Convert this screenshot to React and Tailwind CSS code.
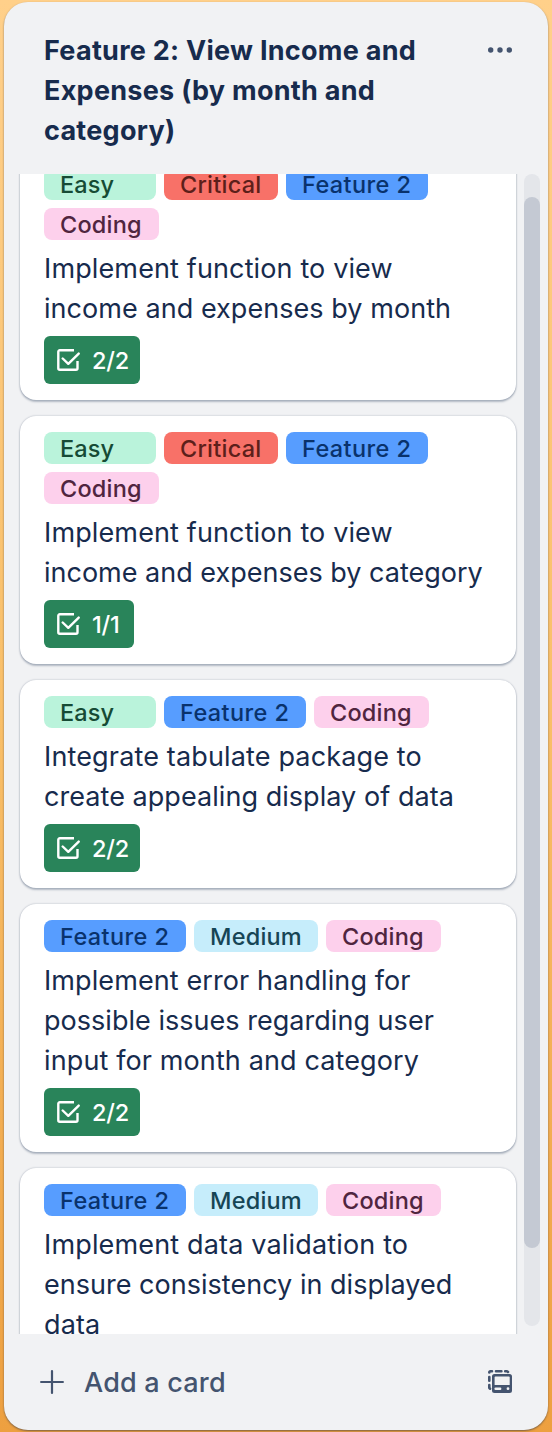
const LABELS = {
  easy: { text: 'Easy', style: 'w-[112px] bg-[#baf3db] text-[#164b35] tracking-[0.1px]' },
  critical: { text: 'Critical', style: 'w-[114px] bg-[#f87168] text-[#5d1f1a] tracking-[0.25px]' },
  feature: { text: 'Feature 2', style: 'w-[142px] bg-[#579dff] text-[#09326c] tracking-[0.4px]' },
  coding: { text: 'Coding', style: 'w-[114.5px] bg-[#fdd0ec] text-[#50253f] tracking-[0.2px]' },
  medium: { text: 'Medium', style: 'w-[124px] bg-[#c6edfb] text-[#164555] tracking-[0.2px]' },
};

const CARDS = [
  {
    labels: ['easy', 'critical', 'feature', 'coding'],
    lines: [
      { text: 'Implement function to view', spacing: 'tracking-[0.13px]' },
      { text: 'income and expenses by month', spacing: 'tracking-[0.05px]' },
    ],
    done: '2/2',
  },
  {
    labels: ['easy', 'critical', 'feature', 'coding'],
    lines: [
      { text: 'Implement function to view', spacing: 'tracking-[0.13px]' },
      { text: 'income and expenses by category', spacing: 'tracking-[0px]' },
    ],
    done: '1/1',
  },
  {
    labels: ['easy', 'feature', 'coding'],
    lines: [
      { text: 'Integrate tabulate package to', spacing: 'tracking-[0.15px]' },
      { text: 'create appealing display of data', spacing: 'tracking-[0.05px]' },
    ],
    done: '2/2',
  },
  {
    labels: ['feature', 'medium', 'coding'],
    lines: [
      { text: 'Implement error handling for', spacing: 'tracking-[0.1px]' },
      { text: 'possible issues regarding user', spacing: 'tracking-[0.03px]' },
      { text: 'input for month and category', spacing: 'tracking-[0.12px]' },
    ],
    done: '2/2',
  },
  {
    labels: ['feature', 'medium', 'coding'],
    lines: [
      { text: 'Implement data validation to', spacing: 'tracking-[0.16px]' },
      { text: 'ensure consistency in displayed', spacing: 'tracking-[0.02px]' },
      { text: 'data', spacing: 'tracking-[0.1px]' },
    ],
    done: '2/2',
  },
];

function CheckIcon() {
  return (
    <svg width="24" height="24" viewBox="0 0 24 24" fill="none" stroke="white" strokeWidth="2.4" strokeLinejoin="round">
      <path d="M18 2.300H4A1.500 1.500 0 0 0 2.300 3.800V20.200A1.500 1.500 0 0 0 3.800 21.700H20A1.500 1.500 0 0 0 21.500 20.200V13" />
      <path d="M6.700 10.500L12.300 15.800L22.700 5.600" strokeLinecap="round" />
    </svg>
  );
}

function TemplateIcon() {
  return (
    <svg width="24" height="24" viewBox="0 0 24 24" fill="none" stroke="#44546f" strokeWidth="2.6" strokeLinecap="round">
      <path d="M1.300 2.500V2.300A1 1 0 0 1 2.300 1.300H4M8 1.300H13.400M17.200 1.300H18.600A1.500 1.500 0 0 1 20 2M1.300 7V10.800M1.300 15V17.200A1.500 1.500 0 0 0 2 18.700" />
      <path fill="#44546f" stroke="none" fillRule="evenodd" d="M6.500 4H21.500A2.500 2.500 0 0 1 24 6.500V20.500A2.500 2.500 0 0 1 21.500 23H6.500A2.500 2.500 0 0 1 4 20.500V6.500A2.500 2.500 0 0 1 6.500 4ZM7.400 6.400A.8.8 0 0 0 6.600 7.200V15H21.700V7.200A.8.8 0 0 0 20.900 6.400ZM7.600 17.500A1.200 1.200 0 0 0 7.600 19.900H12.200A1.200 1.200 0 0 0 12.200 17.500ZM20 17.300A1.400 1.400 0 1 0 20 20.100A1.400 1.400 0 1 0 20 17.300Z" />
    </svg>
  );
}

function Card({ labels, lines, done }) {
  return (
    <li className="rounded-2xl bg-white px-6 py-4 shadow-[0_2px_2px_#091e4240,0_0_2px_#091e424f]">
      <div className="flex flex-wrap gap-2">
        {labels.map((key) => (
          <span key={key} className={`h-8 rounded-lg pl-4 text-[23.5px] leading-[34px] font-medium whitespace-nowrap ${LABELS[key].style}`}>
            {LABELS[key].text}
          </span>
        ))}
      </div>
      <p className="mt-[9px] mb-[7px] text-[27px] leading-10 font-[440] whitespace-nowrap text-[#172b4d]">
        {lines.map((line) => (
          <span key={line.text} className={`block ${line.spacing}`}>{line.text}</span>
        ))}
      </p>
      <div className={`flex h-12 items-center gap-3 rounded-md bg-[#29845a] pl-3 text-[23.5px] tracking-[-0.2px] text-white ${done === '1/1' ? 'w-[90px]' : 'w-24'}`}>
        <CheckIcon />
        <span className="pt-px font-[450]">{done}</span>
      </div>
    </li>
  );
}

export default function App() {
  return (
    <div className="h-[1432px] w-[552px] bg-linear-to-b from-[#ffd08a] via-[#f9bf68] to-[#eda040] px-1 py-0.5 font-['Inter',sans-serif]">
      <section className="flex h-[1428px] flex-col rounded-3xl bg-[#f1f2f4] shadow-[0_1px_2px_#091e4280]">
        <header className="flex h-[172px] shrink-0 items-start justify-between pt-7 pr-9 pl-10">
          <h2 className="pt-px text-[27px] leading-10 font-bold tracking-[0.27px] whitespace-nowrap text-[#172b4d]">
            <span className="block">Feature 2: View Income and</span>
            <span className="block">Expenses (by month and</span>
            <span className="block">category)</span>
          </h2>
          <svg className="mt-2" width="24" height="24" viewBox="0 0 24 24" fill="#44546f">
            <circle cx="2.700" cy="12" r="2.700" />
            <circle cx="12" cy="12" r="2.700" />
            <circle cx="21.300" cy="12" r="2.700" />
          </svg>
        </header>
        <div className="flex h-[1160px] shrink-0 items-start justify-between overflow-hidden pr-2 pl-3.5">
          <ol className="flex h-[1160px] w-[500px] flex-col overflow-hidden px-0.5">
            <div className="-mt-[22px] flex flex-col gap-4">
              {CARDS.map((card) => (
                <Card key={card.lines[1].text} {...card} />
              ))}
            </div>
          </ol>
          <div className="h-[1152px] w-4 rounded-full bg-[#e4e6ea] pt-[23px]">
            <div className="h-[1051px] rounded-full bg-[#c4c9d3]" />
          </div>
        </div>
        <footer className="flex h-24 items-center justify-between pr-9 pl-9 text-[#44546f]">
          <div className="flex items-center gap-5">
            <svg width="24" height="24" viewBox="0 0 24 24" stroke="#44546f" strokeWidth="2.200" strokeLinecap="round">
              <path d="M12 1.100V22.900M1.100 12H22.900" />
            </svg>
            <span className="pt-0.5 text-[27px] leading-10 font-medium tracking-[0.2px]">Add a card</span>
          </div>
          <TemplateIcon />
        </footer>
      </section>
    </div>
  );
}
